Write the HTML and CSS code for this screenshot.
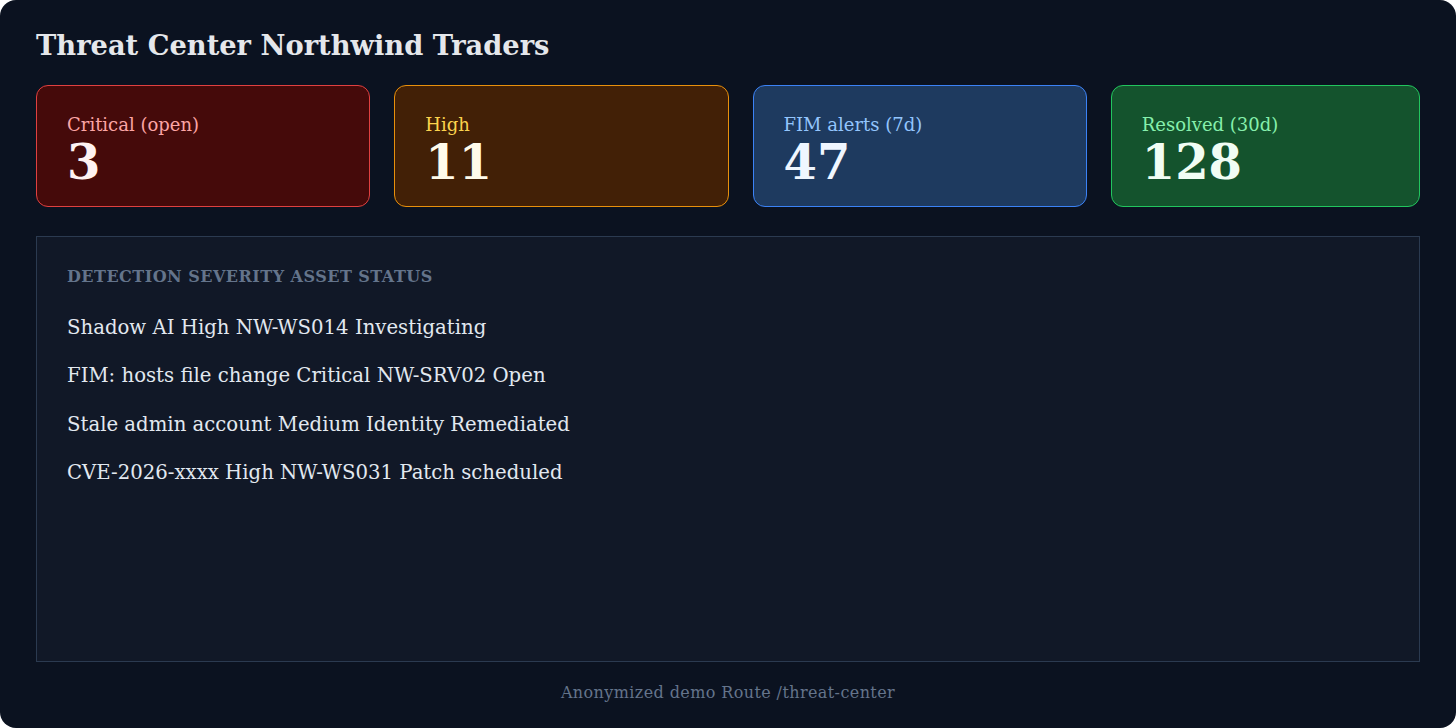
FILE: index.html
```html
<!DOCTYPE html>
<html lang="en">
<head>
<meta charset="utf-8">
<title>Threat Center</title>
<link rel="stylesheet" href="styles.css">
</head>
<body>
<div class="app">
  <h1 class="title">Threat Center Northwind Traders</h1>
  <div class="stats">
    <div class="stat stat-critical">
      <div class="stat-label">Critical (open)</div>
      <div class="stat-value">3</div>
    </div>
    <div class="stat stat-high">
      <div class="stat-label">High</div>
      <div class="stat-value">11</div>
    </div>
    <div class="stat stat-fim">
      <div class="stat-label">FIM alerts (7d)</div>
      <div class="stat-value">47</div>
    </div>
    <div class="stat stat-resolved">
      <div class="stat-label">Resolved (30d)</div>
      <div class="stat-value">128</div>
    </div>
  </div>
  <div class="panel">
    <div class="panel-head">Detection Severity Asset Status</div>
    <div class="row">Shadow AI High NW-WS014 Investigating</div>
    <div class="row">FIM: hosts file change Critical NW-SRV02 Open</div>
    <div class="row">Stale admin account Medium Identity Remediated</div>
    <div class="row">CVE-2026-xxxx High NW-WS031 Patch scheduled</div>
  </div>
  <div class="footer">Anonymized demo Route /threat-center</div>
</div>
</body>
</html>
```

FILE: styles.css
```css
html, body {
  margin: 0;
  padding: 0;
  background: #ffffff;
}

body {
  font-family: "DejaVu Serif", serif;
}

.app {
  box-sizing: border-box;
  width: 1456px;
  height: 728px;
  background: #0b1220;
  border-radius: 16px;
  padding: 28px 36px 0;
  display: flex;
  flex-direction: column;
}

.title {
  margin: 0;
  font-size: 27.3px;
  line-height: 34px;
  font-weight: bold;
  color: #e5e7eb;
}

.stats {
  margin-top: 23px;
  display: grid;
  grid-template-columns: 334fr 334fr 334fr 309fr;
  gap: 24px;
}

.stat {
  box-sizing: border-box;
  height: 122px;
  border: 1px solid;
  border-radius: 12px;
  padding: 27px 30px 0;
}

.stat-label {
  font-size: 18px;
  line-height: 24px;
}

.stat-value {
  font-size: 48px;
  line-height: 50px;
  font-weight: bold;
}

.stat-critical { background: #450a0a; border-color: #e04040; }
.stat-critical .stat-label { color: #fca5a5; }
.stat-critical .stat-value { color: #fef2f2; }

.stat-high { background: #422006; border-color: #e8900c; }
.stat-high .stat-label { color: #fcd34d; }
.stat-high .stat-value { color: #fffbeb; }

.stat-fim { background: #1e3a5f; border-color: #3b82f6; }
.stat-fim .stat-label { color: #93c5fd; }
.stat-fim .stat-value { color: #eff6ff; }

.stat-resolved { background: #14532d; border-color: #22c55e; }
.stat-resolved .stat-label { color: #86efac; }
.stat-resolved .stat-value { color: #f0fdf4; }

.panel {
  box-sizing: border-box;
  margin-top: 29px;
  height: 426px;
  background: #111827;
  border: 1px solid #2b3a50;
  padding: 30px 30px 0;
}

.panel-head {
  font-size: 16px;
  line-height: 20px;
  font-weight: bold;
  letter-spacing: 0.03em;
  text-transform: uppercase;
  color: #64748b;
  margin-bottom: 29px;
}

.row {
  font-size: 19.7px;
  line-height: 24px;
  color: #e2e8f0;
  margin-bottom: 24.33px;
}

.footer {
  text-align: center;
  margin-top: 20px;
  font-size: 16px;
  line-height: 22px;
  letter-spacing: 0.4px;
  color: #64748b;
}
```
